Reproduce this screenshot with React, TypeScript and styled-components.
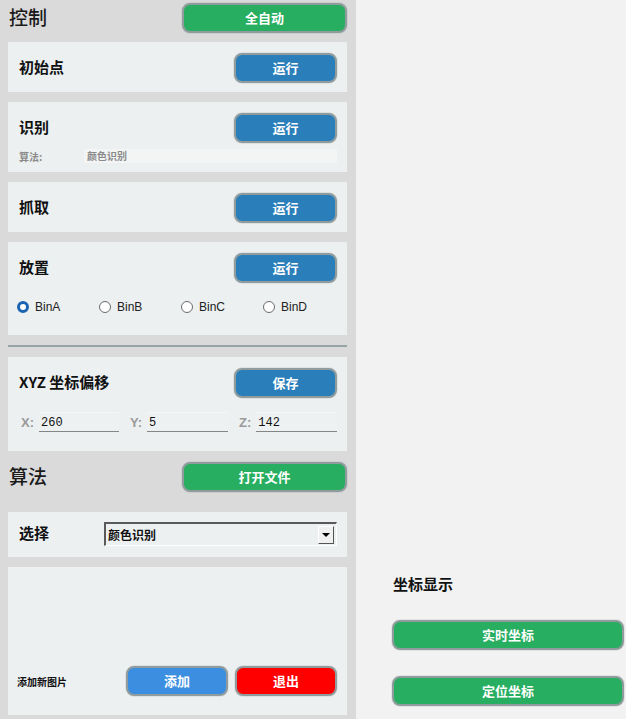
import React from "react";
import styled, { createGlobalStyle } from "styled-components";

const GlobalStyle = createGlobalStyle`
  * { box-sizing: border-box; }
  html, body { margin: 0; padding: 0; background: #f2f2f2; }
  body {
    font-family: "Noto Sans CJK SC", "Liberation Sans", sans-serif;
    color: #111;
  }
`;

const Page = styled.div`
  display: flex;
  width: 626px;
  height: 719px;
  overflow: hidden;
`;

const LeftPanel = styled.div`
  width: 356px;
  height: 719px;
  background: #dadada;
  padding: 0 9px 0 8px;
  display: flex;
  flex-direction: column;
`;

const RightPanel = styled.div`
  flex: 1;
  display: flex;
  flex-direction: column;
  justify-content: flex-end;
  padding: 0 2px 13px 36px;
`;

const HeaderRow = styled.div<{ $top: number; $bottom: number }>`
  display: flex;
  align-items: center;
  justify-content: space-between;
  height: 30px;
  margin-top: ${p => p.$top}px;
  margin-bottom: ${p => p.$bottom}px;
`;

const HeaderTitle = styled.h2`
  margin: 0 0 3px 1px;
  font-size: 19px;
  line-height: 1;
  font-weight: 500;
  color: #1a1a1a;
`;

const Button = styled.button<{ $color: string; $width?: number }>`
  width: ${p => (p.$width ? `${p.$width}px` : "100%")};
  height: 30px;
  background: ${p => p.$color};
  color: #fff;
  border: 2px solid #8f9b9c;
  border-radius: 8px;
  box-shadow: 0 0 0 1px rgba(0, 0, 0, 0.06);
  font-family: "Noto Sans CJK SC", sans-serif;
  font-size: 13px;
  line-height: 1;
  font-weight: 700;
  padding: 0 0 2px;
  cursor: pointer;
`;

const Card = styled.div<{ $pad: string }>`
  background: #ecf0f1;
  padding: ${p => p.$pad};
  display: flex;
  flex-direction: column;
`;

const Row = styled.div`
  display: flex;
  align-items: center;
  justify-content: space-between;
`;

const CardTitle = styled.span`
  font-size: 15px;
  line-height: 1;
  font-weight: 700;
  color: #111;
  padding-left: 1px;
  margin-bottom: 3px;
`;

const SubRow = styled.div`
  display: flex;
  align-items: center;
  height: 14px;
  margin-top: 6px;
  font-size: 10px;
  font-weight: 700;
  color: #8a8a8a;
`;

const SubLabel = styled.span`
  width: 66px;
  padding-left: 1px;
`;

const SubValue = styled.div`
  flex: 1;
  height: 14px;
  line-height: 14px;
  background: #f3f5f5;
  padding-left: 3px;
`;

const RadioRow = styled.div`
  display: flex;
  height: 14px;
  margin: 17px 0 12px;
`;

const RadioItem = styled.label`
  display: flex;
  align-items: center;
  flex: 0 0 82px;
  font-family: "Liberation Sans", Arial, sans-serif;
  font-size: 12px;
  color: #222;
`;

const RadioDot = styled.span<{ $on: boolean }>`
  width: 12px;
  height: 12px;
  border-radius: 50%;
  margin: 0 6px 0 -1px;
  background: #fff;
  border: ${p => (p.$on ? "3px solid #1b64b3" : "1px solid #6b6b6b")};
`;

const Separator = styled.div`
  height: 2px;
  background: #95a5a6;
  margin: 10px 0 10px;
`;

const InputRow = styled.div`
  display: grid;
  grid-template-columns: 1fr 1fr 1fr;
  gap: 11px;
  margin: 14px 0 10px;
  padding-left: 3px;
`;

const Field = styled.div`
  display: flex;
  align-items: center;
  height: 20px;
`;

const FieldLabel = styled.span`
  font-family: "Liberation Sans", Arial, sans-serif;
  font-size: 13px;
  font-weight: 700;
  color: #9a9a9a;
  margin-right: 5px;
`;

const FieldInput = styled.div`
  flex: 1;
  height: 20px;
  line-height: 20px;
  background: #eef1f2;
  border-bottom: 1px solid #858585;
  border-top: 1px solid #f4f6f6;
  font-family: "Liberation Mono", monospace;
  font-size: 12px;
  color: #111;
  padding-left: 2px;
`;

const Select = styled.div`
  width: 233px;
  height: 24px;
  display: flex;
  align-items: center;
  justify-content: space-between;
  border-top: 2px solid #5a5a5a;
  border-left: 2px solid #5a5a5a;
  border-bottom: 1px solid #ffffff;
  border-right: 1px solid #ffffff;
  background: #ecf0f1;
  font-size: 12px;
  font-weight: 700;
  padding-left: 2px;
`;

const SelectArrow = styled.span`
  width: 16px;
  height: 18px;
  margin-right: 2px;
  background: #f0f0f0;
  border-top: 1px solid #fff;
  border-left: 1px solid #fff;
  border-right: 1px solid #555;
  border-bottom: 1px solid #555;
  display: flex;
  align-items: center;
  justify-content: center;
  &::after {
    content: "";
    border-left: 4px solid transparent;
    border-right: 4px solid transparent;
    border-top: 4px solid #000;
  }
`;

const BottomCard = styled(Card)`
  height: 148px;
  justify-content: flex-end;
  margin-top: 10px;
`;

const SmallLabel = styled.span`
  font-size: 10px;
  font-weight: 700;
  color: #111;
  flex: 1;
`;

const ButtonGroup = styled.div`
  display: flex;
  gap: 7px;
`;

const Spacer = styled.div<{ $h: number }>`
  height: ${p => p.$h}px;
  flex-shrink: 0;
`;

const RightTitle = styled.div`
  font-size: 15px;
  line-height: 1;
  font-weight: 700;
  color: #111;
  margin-bottom: 29px;
  padding-left: 1px;
`;

const RightButtons = styled.div`
  display: flex;
  flex-direction: column;
  gap: 26px;
`;

const GREEN = "#27ae60";
const BLUE = "#2a7fba";

const bins = ["BinA", "BinB", "BinC", "BinD"];
const offsets = [
  { label: "X:", value: "260" },
  { label: "Y:", value: "5" },
  { label: "Z:", value: "142" },
];

const RunCard: React.FC<{ title: string; children?: React.ReactNode }> = ({ title, children }) => (
  <Card $pad="11px 10px 9px 10px">
    <Row>
      <CardTitle>{title}</CardTitle>
      <Button $color={BLUE} $width={103}>运行</Button>
    </Row>
    {children}
  </Card>
);

const App: React.FC = () => {
  return (
    <Page>
      <GlobalStyle />
      <LeftPanel>
        <HeaderRow $top={3} $bottom={9}>
          <HeaderTitle>控制</HeaderTitle>
          <Button $color={GREEN} $width={165}>全自动</Button>
        </HeaderRow>

        <RunCard title="初始点" />
        <Spacer $h={10} />
        <RunCard title="识别">
          <SubRow>
            <SubLabel>算法:</SubLabel>
            <SubValue>颜色识别</SubValue>
          </SubRow>
        </RunCard>
        <Spacer $h={10} />
        <RunCard title="抓取" />
        <Spacer $h={10} />
        <RunCard title="放置">
          <RadioRow>
            {bins.map((b, i) => (
              <RadioItem key={b}>
                <RadioDot $on={i === 0} />
                {b}
              </RadioItem>
            ))}
          </RadioRow>
        </RunCard>

        <Separator />

        <Card $pad="11px 10px 9px 10px">
          <Row>
            <CardTitle>XYZ 坐标偏移</CardTitle>
            <Button $color={BLUE} $width={103}>保存</Button>
          </Row>
          <InputRow>
            {offsets.map(o => (
              <Field key={o.label}>
                <FieldLabel>{o.label}</FieldLabel>
                <FieldInput>{o.value}</FieldInput>
              </Field>
            ))}
          </InputRow>
        </Card>

        <HeaderRow $top={11} $bottom={20}>
          <HeaderTitle>算法</HeaderTitle>
          <Button $color={GREEN} $width={165}>打开文件</Button>
        </HeaderRow>

        <Card $pad="10px 10px 11px 10px">
          <Row>
            <CardTitle>选择</CardTitle>
            <Select>
              颜色识别
              <SelectArrow />
            </Select>
          </Row>
        </Card>

        <BottomCard $pad="0 10px 19px 9px">
          <Row>
            <SmallLabel>添加新图片</SmallLabel>
            <ButtonGroup>
              <Button $color="#3b8ee0" $width={102}>添加</Button>
              <Button $color="#ff0000" $width={102}>退出</Button>
            </ButtonGroup>
          </Row>
        </BottomCard>
      </LeftPanel>

      <RightPanel>
        <RightTitle>坐标显示</RightTitle>
        <RightButtons>
          <Button $color={GREEN}>实时坐标</Button>
          <Button $color={GREEN}>定位坐标</Button>
        </RightButtons>
      </RightPanel>
    </Page>
  );
};

export default App;
